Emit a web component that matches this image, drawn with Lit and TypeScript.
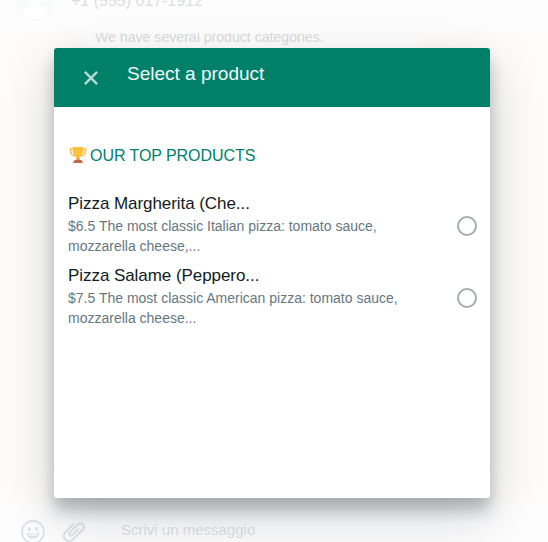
import { LitElement, html, css } from "lit";
import { customElement } from "lit/decorators.js";

interface Product {
  name: string;
  lines: string[];
}

const products: Product[] = [
  {
    name: "Pizza Margherita (Che...",
    lines: ["$6.5 The most classic Italian pizza: tomato sauce,", "mozzarella cheese,..."],
  },
  {
    name: "Pizza Salame (Peppero...",
    lines: ["$7.5 The most classic American pizza: tomato sauce,", "mozzarella cheese..."],
  },
];

@customElement("app-root")
export class AppRoot extends LitElement {
  static styles = css`
    :host {
      display: block;
      position: relative;
      width: 548px;
      height: 542px;
      overflow: hidden;
      font-family: "Liberation Sans", Arial, sans-serif;
      background: #fefefe;
    }
    * {
      box-sizing: border-box;
    }
    .chat {
      display: flex;
      flex-direction: column;
      height: 542px;
    }
    .contact {
      height: 33px;
      flex: none;
      display: flex;
      padding-left: 15px;
      overflow: hidden;
      background: #fdfdfd;
    }
    .avatar {
      width: 40px;
      height: 40px;
      margin-top: -20px;
      flex: none;
    }
    .phone {
      margin: -9px 0 0 16px;
      font-size: 16px;
      line-height: 20px;
      color: #dcdde1;
      white-space: nowrap;
    }
    .messages {
      flex: 1;
      min-height: 0;
      overflow: hidden;
      background: #fdfcfa;
    }
    .bubble {
      margin-left: 86px;
      width: 336px;
      height: 60px;
      padding-left: 9px;
      margin-top: -5px;
      background: #fefefe;
      font-size: 14.2px;
      letter-spacing: -0.04px;
      line-height: 19px;
      color: #dadcdc;
      white-space: nowrap;
    }
    .composer {
      height: 41px;
      flex: none;
      display: flex;
      padding-left: 20px;
      background: #fdfdfe;
      overflow: hidden;
    }
    .smile,
    .clip {
      width: 26px;
      height: 26px;
      flex: none;
      margin-top: 18px;
    }
    .clip {
      margin-left: 15px;
    }
    .entry {
      margin: 19px 0 0 34px;
      font-size: 15px;
      line-height: 20px;
      color: #dfe1e2;
      white-space: nowrap;
    }
    .dialog {
      position: absolute;
      left: 54px;
      top: 48px;
      width: 436px;
      height: 450px;
      background: #fff;
      border-radius: 3px;
      box-shadow: 0 17px 50px 0 rgba(11, 20, 26, 0.19), 0 12px 15px 0 rgba(11, 20, 26, 0.24);
    }
    .bar {
      height: 59px;
      display: flex;
      padding-left: 25px;
      border-radius: 3px 3px 0 0;
      background: #008069;
    }
    .close {
      width: 24px;
      height: 24px;
      margin-top: 18px;
    }
    .title {
      margin: 14px 0 0 24px;
      font-size: 19px;
      line-height: 23px;
      color: #f2f9f8;
      white-space: nowrap;
    }
    .section {
      display: flex;
      align-items: center;
      height: 20px;
      margin: 39px 0 0 14px;
      font-size: 16px;
      letter-spacing: -0.06px;
      color: #008069;
      white-space: nowrap;
    }
    .cup {
      width: 20px;
      height: 18px;
      margin: -2px 2px 0 0;
    }
    .list {
      margin-top: 26px;
      padding: 0 13px 0 14px;
    }
    .product {
      height: 72px;
      display: flex;
      justify-content: space-between;
    }
    .name {
      font-size: 17px;
      letter-spacing: -0.06px;
      line-height: 24px;
      color: #111b21;
      white-space: nowrap;
    }
    .line {
      font-size: 14px;
      line-height: 20px;
      color: #667781;
      white-space: nowrap;
    }
    .radio {
      width: 20px;
      height: 20px;
      margin-top: 24px;
      border: 2px solid #a3adb3;
      border-radius: 50%;
    }
  `;

  render() {
    return html`
      <div class="chat">
        <div class="contact">
          <svg class="avatar" viewBox="0 0 40 40">
            <circle cx="20" cy="20" r="20" fill="#f9fbfb" />
            <circle cx="20" cy="18.5" r="6.5" fill="#fff" />
            <path d="M7 34c2-7 7-8.500 13-8.500s11 1.500 13 8.500c-4 4-8 5-13 5s-9-1-13-5z" fill="#fff" />
          </svg>
          <div class="phone">+1 (555) 017-1912</div>
        </div>
        <div class="messages">
          <div class="bubble">We have several product categories.</div>
        </div>
        <div class="composer">
          <svg class="smile" viewBox="0 0 26 26" fill="none" stroke="#e0e3e5">
            <circle cx="13" cy="13" r="11" stroke-width="1.800" />
            <ellipse cx="9.300" cy="10" rx="1.600" ry="1.900" fill="#e0e3e5" stroke="none" />
            <ellipse cx="16.700" cy="10" rx="1.600" ry="1.900" fill="#e0e3e5" stroke="none" />
            <path d="M6.500 13.800c4 1 9 1 13 0c-.5 8-12.500 8-13 0z" fill="#e0e3e5" stroke="none" />
            <path d="M8.500 15.700q4.500 1 9 0" stroke="#fafbfb" stroke-width="1.200" />
          </svg>
          <svg class="clip" viewBox="0 0 24 24" fill="#e0e3e5" stroke="#e0e3e5" stroke-width=".3">
            <path
              d="M1.816 15.556v.002c0 1.502.584 2.912 1.646 3.972s2.472 1.647 3.974 1.647a5.580 5.580 0 0 0 3.972-1.645l9.547-9.548c.769-.768 1.147-1.767 1.058-2.817-.079-.968-.548-1.927-1.319-2.698-1.594-1.592-4.068-1.711-5.517-.262l-7.916 7.915c-.881.881-.792 2.250.214 3.261.959.958 2.423 1.053 3.263.215l5.511-5.512c.280-.280.267-.722.053-.936l-.244-.244c-.191-.191-.567-.349-.957.040l-5.506 5.506c-.180.180-.635.127-.976-.214-.098-.097-.576-.613-.213-.973l7.915-7.917c.818-.817 2.267-.699 3.230.262.500.501.802 1.100.849 1.685.051.573-.156 1.111-.589 1.543l-9.547 9.549a3.970 3.970 0 0 1-2.829 1.171 3.975 3.975 0 0 1-2.830-1.173 3.973 3.973 0 0 1-1.172-2.828c0-1.071.415-2.076 1.172-2.830l7.209-7.211c.157-.157.264-.579.028-.814L11.500 4.360a.572.572 0 0 0-.834.018l-7.205 7.207a5.577 5.577 0 0 0-1.645 3.971z"
            />
          </svg>
          <div class="entry">Scrivi un messaggio</div>
        </div>
      </div>

      <div class="dialog">
        <div class="bar">
          <svg class="close" viewBox="0 0 24 24" fill="none" stroke="#b2d9d2" stroke-width="2.500">
            <path d="M5.900 5.900l12.200 12.200M18.100 5.900l-12.200 12.200" />
          </svg>
          <div class="title">Select a product</div>
        </div>
        <div class="section">
          <svg class="cup" viewBox="0 0 20 18">
            <path
              d="M5 3H2.300c0 4 1.500 6.500 4.700 7M15 3h2.700c0 4-1.500 6.500-4.700 7"
              fill="none"
              stroke="#fbbf55"
              stroke-width="1.500"
            />
            <path d="M4.500 1h11c0 6-1.500 9.500-4.300 10.500V15H8.800v-3.500C6 10.500 4.500 7 4.500 1z" fill="#fdc13d" />
            <path d="M8.800 11.500h2.400L12 14.500H8z" fill="#e89a3c" />
            <path d="M6.500 14h7l1.500 3H5z" fill="#c4694b" />
          </svg>
          <span>OUR TOP PRODUCTS</span>
        </div>
        <div class="list">
          ${products.map(
            (p) => html`
              <div class="product">
                <div>
                  <div class="name">${p.name}</div>
                  ${p.lines.map((l) => html`<div class="line">${l}</div>`)}
                </div>
                <div class="radio"></div>
              </div>
            `
          )}
        </div>
      </div>
    `;
  }
}
